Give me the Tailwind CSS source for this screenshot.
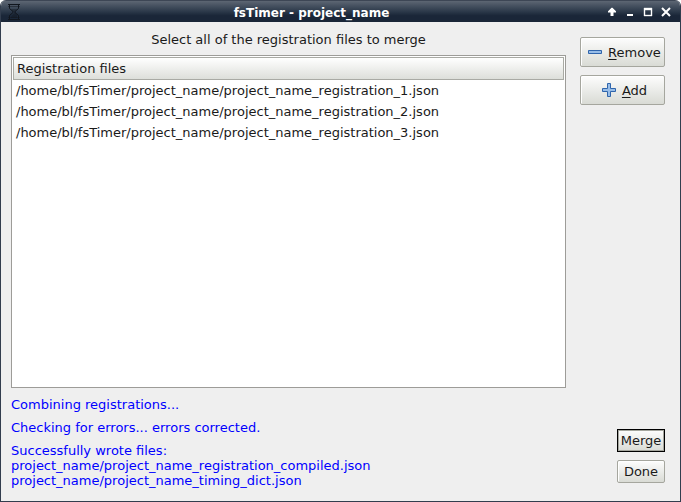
<!DOCTYPE html>
<html lang="en">
<head>
<meta charset="utf-8">
<title>fsTimer - project_name</title>
<script src="https://cdn.jsdelivr.net/npm/@tailwindcss/browser@4"></script>
</head>
<body class="bg-white font-['DejaVu_Sans',sans-serif] text-[13px] leading-[15px] text-[#1a1a1a]">
<div class="flex min-h-screen flex-col overflow-hidden rounded-t-md border-x border-b border-[#323d4e] bg-[#efefef]">
  <header class="flex h-[22px] shrink-0 items-center border-t border-[#3d4655] bg-linear-to-b from-[#5d6673] via-[#2c394a] via-50% to-[#1a2638] to-70% pr-2 pl-[7px]">
    <svg class="h-4 w-3" viewBox="0 0 12 16" fill="none" stroke="#11161e" aria-hidden="true">
      <path d="M0 .5h12M0 15.5h12" />
      <path d="M0 2.5h12M0 13.5h12" stroke-opacity=".5" />
      <path d="M1.5 1v3.5l3.5 3v1l-3.5 3V15M10.5 1v3.500l-3.500 3v1l3.500 3V15" />
      <path d="M3 5h6L7 7.500v1L9 11v3H3v-1l3-4-1-1.500z" fill="#11161e" fill-opacity=".4" stroke="none" />
    </svg>
    <h1 class="flex-1 pt-1 pr-1 text-center text-[12px] font-bold text-white">fsTimer - project_name</h1>
    <div class="flex gap-2 pt-px pr-px">
      <button class="size-[10px]" aria-label="Shade"><svg class="size-[10px]" viewBox="0 0 10 10"><path d="M4.500 .7h1L9 4.200v1.300H6.500V9h-3V5.500H1V4.200z" fill="#fff" /></svg></button>
      <button class="size-[10px]" aria-label="Minimize"><svg class="size-[10px]" viewBox="0 0 10 10"><path d="M2 7h6v2H2z" fill="#fff" /></svg></button>
      <button class="size-[10px]" aria-label="Maximize"><svg class="size-[10px]" viewBox="0 0 10 10"><path d="M1 1h8v8H1zM2 3v5h6V3z" fill="#fff" stroke="#fff" stroke-width=".4" fill-rule="evenodd" /></svg></button>
      <button class="size-[10px]" aria-label="Close"><svg class="size-[10px]" viewBox="0 0 10 10"><path d="M1 1l8 8M9 1L1 9" stroke="#fff" stroke-width="2" /></svg></button>
    </div>
  </header>
  <main class="flex flex-1 gap-[14px] pr-[15px] pl-[10px]">
    <section class="flex min-w-0 flex-1 flex-col pt-[10px] pb-[13px]">
      <p class="mb-2 text-center">Select all of the registration files to merge</p>
      <div class="flex-1 border border-[#9d9c98] bg-white p-px">
        <table class="w-full border-separate border-spacing-0 text-left">
          <thead>
            <tr><th class="h-[23px] border border-[#a9aaa4] bg-linear-to-b from-white to-[#dddfda] px-[3px] font-normal">Registration files</th></tr>
          </thead>
          <tbody>
            <tr><td class="h-[21px] px-[3px]">/home/bl/fsTimer/project_name/project_name_registration_1.json</td></tr>
            <tr><td class="h-[21px] px-[3px]">/home/bl/fsTimer/project_name/project_name_registration_2.json</td></tr>
            <tr><td class="h-[21px] px-[3px]">/home/bl/fsTimer/project_name/project_name_registration_3.json</td></tr>
          </tbody>
        </table>
      </div>
      <div class="mt-[9px] flex flex-col gap-2 text-[#0000ff]">
        <p>Combining registrations...</p>
        <p>Checking for errors... errors corrected.</p>
        <p>Successfully wrote files:<br>project_name/project_name_registration_compiled.json<br>project_name/project_name_timing_dict.json</p>
      </div>
    </section>
    <aside class="flex shrink-0 flex-col items-end gap-2 pt-[15px] pb-[18px]">
      <button class="flex h-[30px] w-[85px] items-center justify-center gap-[6px] rounded-xs border border-[#a5a69e] bg-linear-to-b from-[#fdfdfd] to-[#d9dbd5] pl-1 inset-shadow-[1px_1px_#ffffff]">
        <svg class="h-[14px] w-[14px]" viewBox="0 0 14 14" fill="#97bde8" stroke="#2f65ac" aria-hidden="true"><path d="M.5 5.500h13v3H.5z" /></svg>
        <span><u class="underline-offset-2">R</u>emove</span>
      </button>
      <button class="flex h-[30px] w-[85px] items-center justify-center gap-[6px] rounded-xs border border-[#a5a69e] bg-linear-to-b from-[#fdfdfd] to-[#d9dbd5] pl-1 inset-shadow-[1px_1px_#ffffff]">
        <svg class="h-[14px] w-[14px]" viewBox="0 0 14 14" fill="#97bde8" stroke="#2f65ac" aria-hidden="true"><path d="M5.500 .5h3v5h5v3h-5v5h-3v-5h-5v-3h5z" /></svg>
        <span><u class="underline-offset-2">A</u>dd</span>
      </button>
      <button class="mt-auto h-[23px] w-12 border border-black bg-linear-to-b from-[#fdfdfd] to-[#d9dbd5] inset-shadow-[0_0_0_1px_#a5a69e]">Merge</button>
      <button class="h-[23px] w-12 rounded-xs border border-[#a5a69e] bg-linear-to-b from-[#fdfdfd] to-[#d9dbd5] inset-shadow-[1px_1px_#ffffff]">Done</button>
    </aside>
  </main>
</div>
</body>
</html>
